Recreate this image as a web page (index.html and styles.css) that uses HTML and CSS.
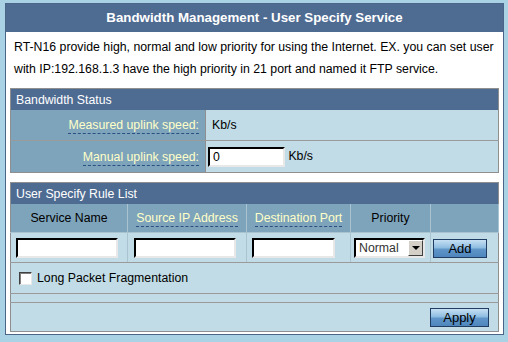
FILE: index.html
```html
<!DOCTYPE html>
<html>
<head>
<meta charset="utf-8">
<link rel="stylesheet" href="styles.css">
</head>
<body>
<div class="panel">
  <div class="title">Bandwidth Management - User Specify Service</div>
  <div class="desc">RT-N16 provide high, normal and low priority for using the Internet. EX. you can set user with IP:192.168.1.3 have the high priority in 21 port and named it FTP service.</div>

  <table class="section status">
    <tr><td colspan="2" class="sec-head">Bandwidth Status</td></tr>
    <tr class="r1">
      <th><span class="hint">Measured uplink speed:</span></th>
      <td>Kb/s</td>
    </tr>
    <tr class="r2">
      <th><span class="hint">Manual uplink speed:</span></th>
      <td><input class="speed" type="text" value="0"> Kb/s</td>
    </tr>
  </table>

  <table class="section rules">
    <tr><td colspan="5" class="sec-head">User Specify Rule List</td></tr>
    <tr class="cols">
      <th class="c1">Service Name</th>
      <th class="c2"><span class="hint">Source IP Address</span></th>
      <th class="c3"><span class="hint">Destination Port</span></th>
      <th class="c4">Priority</th>
      <th class="c5"></th>
    </tr>
    <tr class="inputs">
      <td><input class="f1" type="text"></td>
      <td><input class="f2" type="text"></td>
      <td><input class="f3" type="text"></td>
      <td><span class="sel"><select><option>Normal</option></select><span class="arrow"></span></span></td>
      <td><button class="btn add">Add</button></td>
    </tr>
    <tr class="chk">
      <td colspan="5"><label><span class="box"></span>Long Packet Fragmentation</label></td>
    </tr>
    <tr class="spacer"><td colspan="5"></td></tr>
    <tr class="apply-row"><td colspan="5"><button class="btn apply">Apply</button></td></tr>
  </table>
</div>
</body>
</html>
```

FILE: styles.css
```css
html, body {
  margin: 0;
  padding: 0;
}
body {
  background: #a9d2e4;
  font-family: "Liberation Sans", Arial, sans-serif;
  font-size: 12.3px;
  color: #000;
  padding: 3px 0 0 5px;
}
.panel {
  width: 497px;
  height: 330px;
  background: #fff;
  border: 1px solid #4a6588;
  box-sizing: content-box;
}
.title {
  height: 28px;
  line-height: 28px;
  background: #4e6b92;
  color: #fff;
  font-weight: bold;
  font-size: 13.3px;
  text-align: center;
}
.desc {
  padding: 4px 8px 8px 8px;
  line-height: 22px;
  height: 44px;
}
.section {
  margin: 0 4px;
  width: 489px;
  border-collapse: collapse;
  border: 1px solid #8f8f8f;
  background: #c1dce6;
  font-size: 12.3px;
}
.section td, .section th {
  padding: 0;
  font-weight: normal;
}
.sec-head {
  background: #4e6b92;
  color: #fff;
  height: 21px;
  padding-left: 5px !important;
  text-align: left;
}
.hint {
  color: #ffffc8;
  border-bottom: 1px dashed #2a4f80;
  padding-bottom: 1px;
}
.status th {
  width: 188px;
  background: #7ea4bb;
  text-align: right;
  padding-right: 6px !important;
  border-right: 1px solid #8f8f8f;
}
.status td {
  padding-left: 5px !important;
}
.status tr.r1 td {
  padding-left: 6px !important;
}
.status tr.r1 th, .status tr.r1 td {
  height: 30px;
  border-bottom: 1px solid #9a9a9a;
}
.status tr.r2 td {
  padding-left: 2px !important;
}
.status tr.r2 th, .status tr.r2 td {
  height: 31px;
}
input[type=text] {
  height: 20px;
  box-sizing: border-box;
  border: 2px inset #d4d0c8;
  border-top-color: #404040;
  border-left-color: #404040;
  border-right-color: #e8e8e8;
  border-bottom-color: #e8e8e8;
  font-family: "Liberation Sans", Arial, sans-serif;
  font-size: 12.3px;
  padding: 0 3px;
  background: #fff;
  vertical-align: middle;
  margin: 0;
}
.speed {
  width: 77px;
  margin-right: 1px;
}
.rules {
  margin-top: 9px;
}
.rules .cols th {
  background: #7ea4bb;
  height: 28px;
  text-align: center;
  border-right: 1px solid #a9c3d0;
  border-bottom: 1px solid #a9c3d0;
}
.rules .c1 { width: 116px; }
.rules .c2 { width: 118px; }
.rules .c3 { width: 103px; }
.rules .c4 { width: 79px; }
.rules .c5 { border-right: none; }
.rules .inputs td {
  height: 29px;
  text-align: left;
  padding-left: 5px;
  border-right: 1px solid #a9c3d0;
  border-bottom: 1px solid #9a9a9a;
}
.rules .inputs td:nth-child(2) { padding-left: 6px; }
.rules .inputs td:nth-child(3) { padding-left: 5px; }
.rules .inputs td:nth-child(4) { padding-left: 3px; }
.rules .inputs td:last-child { border-right: none; padding-left: 2px; }
.f1, .f2 { width: 102px; }
.f3 { width: 83px; }
.sel {
  position: relative;
  display: inline-block;
  vertical-align: middle;
}
.sel select {
  appearance: none;
  -webkit-appearance: none;
  width: 71px;
  height: 20px;
  border: 2px inset #d4d0c8;
  border-top-color: #404040;
  border-left-color: #404040;
  border-right-color: #e8e8e8;
  border-bottom-color: #e8e8e8;
  background: #fff;
  font-family: "Liberation Sans", Arial, sans-serif;
  font-size: 12.3px;
  color: #333;
  padding: 0 0 0 3px;
  margin: 0;
  border-radius: 0;
  display: block;
}
.arrow {
  position: absolute;
  right: 2px;
  top: 2px;
  width: 15px;
  height: 16px;
  box-sizing: border-box;
  background: #d4d0c8;
  border: 1px solid;
  border-color: #fff #404040 #404040 #fff;
}
.arrow::after {
  content: "";
  position: absolute;
  left: 3px;
  top: 5px;
  border-left: 4px solid transparent;
  border-right: 4px solid transparent;
  border-top: 4px solid #000;
}
.btn {
  height: 19px;
  border: 1px solid #1f3c62;
  background: linear-gradient(#c6e0f3 0%, #8fbde2 45%, #5f95c8 55%, #4e86bd 100%);
  font-family: "Liberation Sans", Arial, sans-serif;
  font-size: 13px;
  color: #000;
  padding: 0;
  line-height: 17px;
  vertical-align: middle;
  margin: 0;
}
.add {
  width: 54px;
  margin-top: 2px;
}
.rules .chk td {
  height: 30px;
  padding-left: 8px;
  border-bottom: 1px solid #9a9a9a;
}
.chk label {
  display: flex;
  align-items: center;
  gap: 5px;
}
.box {
  width: 13px;
  height: 13px;
  box-sizing: border-box;
  background: #fff;
  border: 1px solid;
  border-color: #404040 #e8e8e8 #e8e8e8 #404040;
  box-shadow: inset 1px 1px 0 #808080;
}
.rules .spacer td {
  height: 8px;
  border-bottom: 1px solid #9a9a9a;
}
.rules .apply-row td {
  height: 28px;
  text-align: right;
  padding-right: 9px;
}
.apply {
  width: 59px;
  margin-top: 1px;
}
```
